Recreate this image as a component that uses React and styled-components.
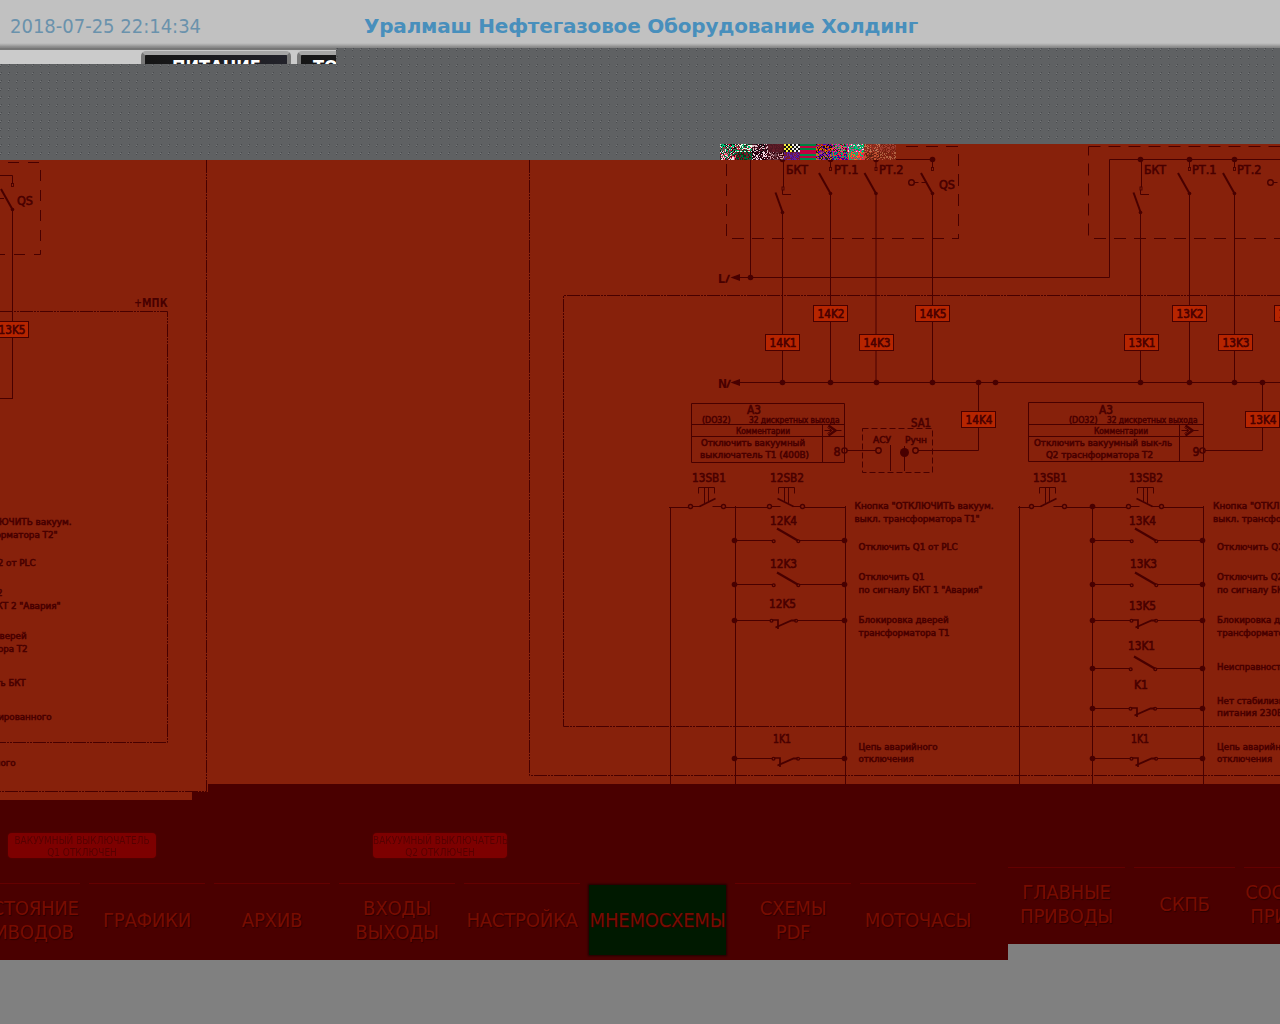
import React from "react";
import styled, { createGlobalStyle } from "styled-components";

const INK = "#480000";
const CLAY = "#87210b";
const FACE = '"DejaVu Sans Condensed", "DejaVu Sans", "Noto Sans", sans-serif';

const GlobalStyle = createGlobalStyle`
  html, body { margin: 0; padding: 0; background: #808080; }
  * { box-sizing: border-box; }
`;

const Screen = styled.div`
  width: 1280px;
  height: 1024px;
  overflow: hidden;
  display: flex;
  flex-direction: column;
  background: #808080;
  font-family: ${FACE};
  font-stretch: condensed;
`;

const Header = styled.header`
  flex: none;
  height: 48px;
  display: flex;
  align-items: center;
  padding: 4px 0 0 10px;
  background: linear-gradient(#c1c1c1 0, #c1c1c1 43px, #a8a8a8 45px, #8a8a8a 47px, #858585 48px);
`;

const Clock = styled.time`
  width: 354px;
  font-size: 20px;
  letter-spacing: ${(p) => p.$track}px;
  color: #6a92ac;
  white-space: nowrap;
`;

const Title = styled.h1`
  margin: 0;
  font-family: "DejaVu Sans", sans-serif;
  font-stretch: normal;
  font-size: 20px;
  font-weight: bold;
  letter-spacing: ${(p) => p.$track}px;
  color: #488fbc;
  white-space: nowrap;
`;

const Backdrop = styled.div`
  flex: none;
  height: 96px;
  background-color: #5f6163;
  background-image: url("data:image/svg+xml,%3Csvg xmlns='http://www.w3.org/2000/svg' width='8' height='8'%3E%3Cpath d='M0 1h1v1H0z' fill='%2377797b'/%3E%3Cpath d='M1 0h1v1H1zM0 2h1v1H0z' fill='%234a4c4f'/%3E%3C/svg%3E");
`;

const TabStrip = styled.div`
  width: 336px;
  height: 16px;
  overflow: hidden;
  display: flex;
  gap: 6px;
  padding: 3px 0 0 141px;
  background: linear-gradient(#777 0, #777 2px, #cbcbcb 2px);
`;

const Tab = styled.div`
  flex: none;
  width: 150px;
  height: 40px;
  border: 4px solid #777;
  border-top-color: #a6a6a6;
  border-radius: 5px 5px 0 0;
  background: linear-gradient(100deg, #151515, #23232b);
  color: #fff;
  font-size: 18px;
  font-weight: bold;
  line-height: 18px;
  padding: 3px 0 0 ${(p) => p.$pad}px;
  white-space: nowrap;
`;

const Diagram = styled.svg`
  flex: none;
  display: block;
  width: 1280px;
  height: 656px;
  font-family: ${FACE};
  background: linear-gradient(#5f6163 16px, #4a0000 16px);
`;

const Footer = styled.footer`
  flex: none;
  display: flex;
  align-items: flex-start;
`;

const Pane = styled.div`
  flex: none;
  width: ${(p) => p.$w}px;
  height: ${(p) => p.$h}px;
  overflow: hidden;
  display: flex;
  flex-direction: column;
  justify-content: flex-end;
  background: #4a0000;
`;

const Badges = styled.div`
  flex: 1;
  display: flex;
  align-items: flex-start;
  gap: 217px;
  padding: 33px 0 0 8px;
`;

const Badge = styled.div`
  width: ${(p) => p.$w}px;
  height: 25px;
  border-radius: 4px;
  padding-top: 2px;
  background: #7d0000;
  box-shadow: 0 0 2px #650000;
  color: #560000;
  font-size: 10px;
  line-height: 11.5px;
  letter-spacing: ${(p) => p.$track}px;
  text-align: center;
  white-space: nowrap;
  filter: blur(0.6px);
`;

const Nav = styled.nav`
  flex: none;
  height: 77px;
  display: flex;
  gap: 9px;
  margin-left: ${(p) => p.$shift}px;
`;

const NavButton = styled.button`
  flex: none;
  width: ${(p) => p.$w}px;
  height: ${(p) => (p.$on ? 70 : 77)}px;
  margin: ${(p) => (p.$on ? "2px 0 0" : "0")};
  padding: ${(p) => (p.$on ? "0" : "0 0 4px")};
  border: 0 solid #640000;
  border-top-width: ${(p) => (p.$on ? 0 : 1)}px;
  display: flex;
  flex-direction: column;
  align-items: center;
  justify-content: center;
  background: ${(p) => (p.$on ? "#001900" : "transparent")};
  box-shadow: ${(p) => (p.$on ? "0 0 2px 1px #200000" : "none")};
  color: #780c00;
  font: 20px/24px ${FACE};
  letter-spacing: -0.2px;
  text-shadow: 1px 1px 1px #2c0000;
  white-space: nowrap;
`;

/* ---------- schematic parts ---------- */

function T({ x, y, w, s = 10, b, end, children }) {
  return (
    <text
      x={end ? x - w : x}
      y={y}
      fontSize={s}
      fontWeight={b ? "bold" : "normal"}
      textLength={w}
      lengthAdjust="spacingAndGlyphs"
      fill={INK}
      stroke={INK}
      strokeWidth={b ? 0 : 0.55}
    >
      {children}
    </text>
  );
}

const Wire = ({ d, w = 1 }) => <path d={d} fill="none" stroke={INK} strokeWidth={w} />;
const Dashed = ({ d, dash = "12 8", offset = 0 }) => (
  <path d={d} fill="none" stroke={INK} strokeDasharray={dash} strokeDashoffset={offset} />
);
const Chain = ({ d }) => <Dashed d={d} dash="13 1 2 1 2 1" />;
const Dot = ({ x, y, r = 2.8 }) => <circle cx={x} cy={y} r={r} fill={INK} />;
const Ring = ({ x, y, r = 2.2 }) => (
  <circle cx={x} cy={y} r={r} fill="none" stroke={INK} strokeWidth="1.4" />
);

function Relay({ x, y, name }) {
  return (
    <g>
      <rect x={x} y={y} width="34" height="16" fill="#b62500" stroke={INK} />
      <T x={x + 4} y={y + 12.5} w={27} s={11.5}>{name}</T>
    </g>
  );
}

function Blade({ x, y = 159.5, to, dot = true }) {
  return (
    <g>
      {dot && <Dot x={x} y={y} />}
      <Wire d={`M${x} ${y}v8`} />
      <rect x={x - 1} y={y + 8} width="2" height="3" fill={CLAY} stroke={INK} strokeWidth="0.9" />
      <Wire d={`M${x - 11.5} ${y + 13.5}L${x} ${y + 34}`} w={2} />
      <Dot x={x} y={y + 34} r={1.8} />
      <Wire d={`M${x} ${y + 34}V${to}`} />
    </g>
  );
}

function Limit({ x }) {
  return (
    <g>
      <Dot x={x} y={159.5} />
      <Wire d={`M${x + 1} 160V187M${x} 187v7.500h8.5`} />
      <rect x={x - 0.5} y="187" width="2" height="3" fill={CLAY} stroke={INK} strokeWidth="0.9" />
      <Wire d={`M${x - 7} 192.5L${x} 212`} w={2} />
      <Dot x={x} y={212.5} r={1.8} />
      <Wire d={`M${x} 213V382.5`} />
    </g>
  );
}

function Isolator({ x, y }) {
  return (
    <g>
      <Ring x={x} y={y} r={2.8} />
      <Wire d={`M${x + 3} ${y}h4M${x + 10} ${y}h5`} />
    </g>
  );
}

function PushButton({ x, closed }) {
  return (
    <g>
      <Wire d={`M${x} 493.5V487.5h16v6M${x + 6} 487.5v${closed ? 16 : 14}M${x + 10} 487.5v${closed ? 14 : 16}`} />
      <Ring x={closed ? x - 8 : x - 9} y={506.5} r={2} />
      <Ring x={closed ? x + 25 : x + 24} y={506.5} r={2} />
      {closed ? (
        <Wire d={`M${x - 6} 506.5h8M${x + 14} 506.5h9`} />
      ) : (
        <Wire d={`M${x - 7} 506.5h9M${x + 14} 506.5h8`} />
      )}
      <Wire d={closed ? `M${x + 1} 506.5L${x + 17} 498.5` : `M${x - 1} 498.5L${x + 15} 506.5`} w={1.6} />
    </g>
  );
}

function Rung({ l, r, y, c, nc }) {
  return (
    <g>
      <Dot x={l} y={y} />
      <Dot x={r} y={y} />
      <Wire d={`M${l} ${y}H${c - 1.5}M${c + 26} ${y}H${r}`} />
      <circle cx={c} cy={y + (nc ? 0.3 : 0.8)} r="1.4" fill={CLAY} stroke={INK} strokeWidth="1.3" />
      <circle cx={c + 24.6} cy={y + (nc ? 0.3 : 0.8)} r="1.4" fill={CLAY} stroke={INK} strokeWidth="1.3" />
      {nc ? (
        <g>
          <Wire d={`M${c + 1} ${y - 0.5}h5.5v9`} w={1.7} />
          <Wire d={`M${c + 4} ${y + 7}L${c + 20} ${y}h4`} w={1.9} />
        </g>
      ) : (
        <Wire d={`M${c + 3.3} ${y - 12}L${c + 24} ${y}`} w={2.2} />
      )}
    </g>
  );
}

function Module({ x, y, w, split, pin, children }) {
  return (
    <g>
      <Wire
        d={`M${x} ${y}h${w}v59h${-w}zM${x} 424.5h${w}M${x} 436.5h${w}M${split} 424.5V${y + 59}M${split + 2} 430.5h7M${split + 13} 430.5h6`}
      />
      <Wire d={`M${split + 6} 425.5l7 5l-7 5`} w={2.4} />
      <Wire d={`M${split + 5} 427.5l4.5 3l-4.5 3`} w={1} />
      <T x={x + w - 11} y={456} w={7} s={12}>{pin}</T>
      {children}
    </g>
  );
}

/* Scrambled pixels left in the upper edge of the schematic */
const BLOCKS = [
  [["#ffd0d8", "#00a060", "#d01040", "#101010", "#00d080"], ["#f05070", "#007040", "#e8e8e8", "#500010"]],
  [["#e8f8e8", "#00a860", "#203020", "#c02040"], ["#006838", "#900020", "#083818"]],
  [["#401020", "#e0c0c8", "#080808", "#601828"], ["#180008", "#f0d8e0", "#501020"]],
  [["#561824", "#4c1820", "#621c28"], ["#684048", "#30000c", "#d0a0a8", "#501820"]],
  [["#f8f040", "#101010", "#f0f0f0"], ["#50107c", "#6020a0", "#802020"]],
  [["#008040", "#c00040", "#306040"], ["#c00040", "#008848", "#601830"]],
  [["#5000c0", "#e07000", "#101010", "#b02020"], ["#7000d0", "#c07020", "#202020"]],
  [["#00c060", "#d000b0", "#402020", "#ff4060"], ["#00b070", "#ff2030", "#4000a0"]],
  [["#00c080", "#f8d0e0", "#ff2080", "#00a050"], ["#f02050", "#00c070", "#ff6020"]],
  [["#a03020", "#783020", "#c07050", "#8a2818"], ["#c05030", "#90301c", "#602010"]],
  [["#903020", "#782010", "#a44030"], ["#8a2414", "#b06040", "#782010"]],
];

function Scramble() {
  let seed = 4127;
  const next = () => (seed = (seed * 16807) % 2147483647) / 2147483647;
  const runs = {};
  BLOCKS.forEach((halves, i) => {
    halves.forEach((colors, h) => {
      for (let y = 0; y < 8; y++) {
        for (let x = 0; x < 16; x++) {
          const striped = i === 5;
          const c = striped
            ? colors[(y >> 1) % 2]
            : i === 4 && h === 0
            ? colors[((x >> 1) + (y >> 1)) % 2 ? 1 : x < 8 ? 0 : 2]
            : colors[Math.floor(next() * colors.length)];
          runs[c] = (runs[c] || "") + `M${720 + i * 16 + x} ${144 + h * 8 + y}h1v1h-1z`;
        }
      }
    });
  });
  return (
    <g shapeRendering="crispEdges">
      {Object.entries(runs).map(([c, d]) => (
        <path key={c} d={d} fill={c} />
      ))}
    </g>
  );
}

const NOTES = [
  [-4, 509, 139, 'Кнопка "ОТКЛЮЧИТЬ вакуум.'],
  [-4, 522, 125, 'выкл. трансформатора Т#"'],
  [0, 550, 99, "Отключить Q# от PLC"],
  [0, 580, 66, "Отключить Q#"],
  [0, 593, 124, 'по сигналу БКТ # "Авария"'],
  [0, 623, 90, "Блокировка дверей"],
  [0, 636, 91, "трансформатора Т#"],
  [0, 670, 89, "Неисправность БКТ"],
  [0, 704, 115, "Нет стабилизированного"],
  [0, 716, 66, "питания 230В"],
  [0, 750, 79, "Цепь аварийного"],
  [0, 762, 55, "отключения"],
];

function Notes({ x, unit, dy = 0, skip = [] }) {
  return NOTES.map(([dx, y, w, text], i) =>
    skip.includes(i) ? null : (
      <T key={i} x={x + dx - 0.4} y={y + dy - 0.3} w={w} s={9.5}>
        {text.replace("#", unit)}
      </T>
    )
  );
}

function Schematic() {
  return (
    <Diagram viewBox="0 144 1280 656">
      <defs>
        <pattern id="grain" width="8" height="8" patternUnits="userSpaceOnUse">
          <rect width="8" height="8" fill="#5f6163" />
          <path d="M0 1h1v1H0z" fill="#77797b" />
          <path d="M1 0h1v1H1zM0 2h1v1H0z" fill="#4a4c4f" />
        </pattern>
      </defs>
      <rect y="144" width="720" height="16" fill="url(#grain)" />
      <path d="M0 160H720V144H1280V784H208V792H192V800H0Z" fill={CLAY} />

      {/* tail of the cabinet on the left */}
      <Wire d="M8 162.5h11M28 162.5h11M40.500 170v11M40.500 190v11M40.500 210v11M40.500 230v11M40.500 250v4.500h-6.500M0 254.500h5M14 254.500h11" />
      <Wire d="M0 175.500H12.500" />
      <Blade x={12.5} y={175.5} to={398.5} dot={false} />
      <Wire d="M0 398.500H13M0 198.500h4" />
      <T x={17} y={205} w={16} s={12}>QS</T>
      <T x={134} y={307} w={33.5} s={11.5} b>+МПК</T>
      <Chain d="M0 311.500H167.500V742.500H0" />
      <Chain d="M206.500 160V791.500H0" />
      <Relay x={-5.5} y={321.5} name="13K5" />
      <Notes x={-63} unit="2" dy={16} skip={[9, 11]} />

      {/* frames */}
      <Chain d="M529.500 160V775.500H1280" />
      <Chain d="M1280 295.500H563.500V726.500H1280" />
      <Dashed d="M906 146.500H958.500" />
      <Dashed d="M958.500 154V238.500" />
      <Dashed d="M732 238.500H959" />
      <Dashed d="M726.500 164V236" />
      <Dashed d="M1088.500 146.500H1280" />
      <Dashed d="M1088.500 146.500V236" offset={3} />
      <Dashed d="M1094 238.500H1280" />

      {/* supply contacts */}
      <Wire d="M750.500 277.500V159.500H932.500" />
      <Wire d="M740 277.500H1109.500V159.500H1280" />
      <Limit x={782.5} />
      <Blade x={830.5} to={382.5} />
      <Blade x={876} to={382.5} />
      <Blade x={932.5} to={382.5} />
      <Isolator x={911.5} y={182.5} />
      <Limit x={1140.5} />
      <Blade x={1189.5} to={382.5} />
      <Blade x={1234.5} to={382.5} />
      <Isolator x={1270.5} y={182.5} />
      <T x={786} y={174} w={22} s={11.5}>БКТ</T>
      <T x={834} y={174} w={24.5} s={11.5}>РТ.1</T>
      <T x={879} y={174} w={24.5} s={11.5}>РТ.2</T>
      <T x={939} y={189} w={16} s={11.5}>QS</T>
      <T x={1144} y={174} w={22} s={11.5}>БКТ</T>
      <T x={1192} y={174} w={24.5} s={11.5}>РТ.1</T>
      <T x={1237} y={174} w={24.5} s={11.5}>РТ.2</T>
      <Scramble />

      {/* L and N rails */}
      <T x={718} y={283} w={7} s={12} b>L</T>
      <T x={725.5} y={282} w={4} s={9}>/</T>
      <path d="M730.500 277.500l9.500-3.500v7z" fill={INK} />
      <Dot x={750.5} y={277.5} />
      <T x={718} y={388} w={9} s={12} b>N</T>
      <T x={726.5} y={387} w={4} s={9}>/</T>
      <path d="M730.500 382.500l9.500-3.500v7z" fill={INK} />
      <Wire d="M739 382.500H1280" />
      {[782.5, 830.5, 876.5, 932.5, 978.5, 995.5, 1140.5, 1189.5, 1234.5, 1262.5].map((x) => (
        <Dot key={x} x={x} y={382.5} />
      ))}
      <Wire d="M978.500 382V450.500H918M1262.500 382V450.500H1205M847 450.500H876" />
      <Relay x={765.5} y={334.5} name="14K1" />
      <Relay x={813.5} y={305.5} name="14K2" />
      <Relay x={859.5} y={334.5} name="14K3" />
      <Relay x={915.5} y={305.5} name="14K5" />
      <Relay x={961.5} y={411.5} name="14K4" />
      <Relay x={1124.5} y={334.5} name="13K1" />
      <Relay x={1172.5} y={305.5} name="13K2" />
      <Relay x={1218.5} y={334.5} name="13K3" />
      <Relay x={1274.5} y={305.5} name="13K5" />
      <Relay x={1245.5} y={411.5} name="13K4" />

      {/* output modules */}
      <Module x={691.5} y={403.5} w={153} split={822.5} pin="8">
        <T x={747} y={413.5} w={14} s={11.5}>A3</T>
        <T x={702} y={423} w={28.5} s={9}>(DO32)</T>
        <T x={749} y={423} w={90.5} s={9}>32 дискретных выхода</T>
        <T x={736} y={434} w={54} s={9.5}>Комментарии</T>
        <T x={701} y={446} w={104} s={9.5}>Отключить вакуумный</T>
        <T x={700} y={458} w={109} s={9.5}>выключатель Т1 (400В)</T>
      </Module>
      <Ring x={844.5} y={450.5} r={2.6} />
      <Module x={1028.5} y={402.5} w={175} split={1179.5} pin="9">
        <T x={1099} y={413.5} w={14} s={11.5}>A3</T>
        <T x={1069} y={423} w={28.5} s={9}>(DO32)</T>
        <T x={1107} y={423} w={90.5} s={9}>32 дискретных выхода</T>
        <T x={1094} y={434} w={54} s={9.5}>Комментарии</T>
        <T x={1034} y={446} w={138} s={9.5}>Отключить вакуумный вык-ль</T>
        <T x={1046} y={458} w={107} s={9.5}>Q2 траснформатора Т2</T>
      </Module>
      <Ring x={1202.5} y={450.5} r={2.6} />

      {/* mode switch */}
      <Dashed d="M862.500 428.500H932.500V472.500H862.500Z" dash="6 3" />
      <T x={911} y={427} w={20} s={12}>SA1</T>
      <T x={873} y={443} w={18} s={9.5}>АСУ</T>
      <T x={905} y={443} w={22} s={9.5}>Ручн</T>
      <Ring x={878.5} y={450.5} r={2.7} />
      <Ring x={915.5} y={450.5} r={2.7} />
      <Wire d="M890.500 445V471M904.500 446V471" />
      <Dot x={904.5} y={452.5} r={4.5} />

      {/* push buttons */}
      <T x={692} y={482} w={34} s={12}>13SB1</T>
      <T x={770} y={482} w={34} s={12}>12SB2</T>
      <T x={1033} y={482} w={34} s={12}>13SB1</T>
      <T x={1129} y={482} w={34} s={12}>13SB2</T>
      <PushButton x={698.5} closed />
      <PushButton x={778.5} />
      <PushButton x={1039.5} closed />
      <PushButton x={1137.5} />
      <Wire d="M669 507.500H688M726 507.500H767M804 507.500H845.500" />
      <Wire d="M1018 507.500H1029M1067 507.500H1126M1164 507.500H1203.500" />
      <Wire d="M670.500 507V784M735.500 506V784M845.500 506V784M1019.500 506V784M1092.500 506V784M1203.500 506V784" />
      <Dot x={1092.5} y={506.5} />

      {/* rungs */}
      <Rung l={734.5} r={844.5} y={540.5} c={773.7} />
      <Rung l={734.5} r={844.5} y={584.5} c={773.7} />
      <Rung l={734.5} r={844.5} y={620.5} c={771.5} nc />
      <Rung l={734.5} r={844.5} y={758.5} c={773.5} nc />
      <Rung l={1092.5} r={1202.500} y={540.5} c={1131.7} />
      <Rung l={1092.5} r={1202.500} y={584.5} c={1131.7} />
      <Rung l={1092.5} r={1202.500} y={620.5} c={1131.5} nc />
      <Rung l={1092.5} r={1202.500} y={668.5} c={1130.7} />
      <Rung l={1092.5} r={1202.500} y={708.5} c={1130.5} nc />
      <Rung l={1092.5} r={1202.500} y={758.5} c={1131.5} nc />
      <T x={770} y={525} w={27} s={12}>12K4</T>
      <T x={770} y={568} w={27} s={12}>12K3</T>
      <T x={769} y={608} w={27} s={12}>12K5</T>
      <T x={773} y={743} w={18} s={12}>1K1</T>
      <T x={1129} y={525} w={27} s={12}>13K4</T>
      <T x={1130} y={568} w={27} s={12}>13K3</T>
      <T x={1129} y={610} w={27} s={12}>13K5</T>
      <T x={1128} y={650} w={27} s={12}>13K1</T>
      <T x={1134} y={689} w={14} s={12}>K1</T>
      <T x={1131} y={743} w={18} s={12}>1K1</T>
      <Notes x={859} unit="1" skip={[7, 8, 9]} />
      <Notes x={1217.5} unit="2" />
    </Diagram>
  );
}

const LEFT_NAV = [
  { lines: ["СОСТОЯНИЕ", "ПРИВОДОВ"], w: 116 },
  { lines: ["ГРАФИКИ"], w: 116 },
  { lines: ["АРХИВ"], w: 116 },
  { lines: ["ВХОДЫ", "ВЫХОДЫ"], w: 116 },
  { lines: ["НАСТРОЙКА"], w: 116 },
  { lines: ["МНЕМОСХЕМЫ"], w: 137, on: true },
  { lines: ["СХЕМЫ", "PDF"], w: 116 },
  { lines: ["МОТОЧАСЫ"], w: 116 },
];

const RIGHT_NAV = [
  { lines: ["ГЛАВНЫЕ", "ПРИВОДЫ"], w: 117 },
  { lines: ["СКПБ"], w: 101 },
  { lines: ["СОСТОЯНИЕ", "ПРИВОДОВ"], w: 116 },
];

const Menu = ({ items, shift }) => (
  <Nav $shift={shift}>
    {items.map((it) => (
      <NavButton key={it.lines.join()} $w={it.w} $on={it.on}>
        {it.lines.map((l) => (
          <span key={l}>{l}</span>
        ))}
      </NavButton>
    ))}
  </Nav>
);

export default function App() {
  return (
    <Screen>
      <GlobalStyle />
      <Header>
        <Clock $track={0}>2018-07-25 22:14:34</Clock>
        <Title $track={-0.2}>Уралмаш Нефтегазовое Оборудование Холдинг</Title>
      </Header>
      <Backdrop>
        <TabStrip>
          <Tab $pad={27}>ПИТАНИЕ</Tab>
          <Tab $pad={12}>ТОРМОЗ</Tab>
        </TabStrip>
      </Backdrop>
      <Schematic />
      <Footer>
        <Pane $w={1008} $h={160}>
          <Badges>
            <Badge $w={148} $track={0}>
              ВАКУУМНЫЙ ВЫКЛЮЧАТЕЛЬ
              <br />
              Q1 ОТКЛЮЧЕН
            </Badge>
            <Badge $w={134} $track={0}>
              ВАКУУМНЫЙ ВЫКЛЮЧАТЕЛЬ
              <br />
              Q2 ОТКЛЮЧЕН
            </Badge>
          </Badges>
          <Menu items={LEFT_NAV} shift={-36} />
        </Pane>
        <Pane $w={272} $h={144}>
          <Menu items={RIGHT_NAV} shift={0} />
        </Pane>
      </Footer>
    </Screen>
  );
}
